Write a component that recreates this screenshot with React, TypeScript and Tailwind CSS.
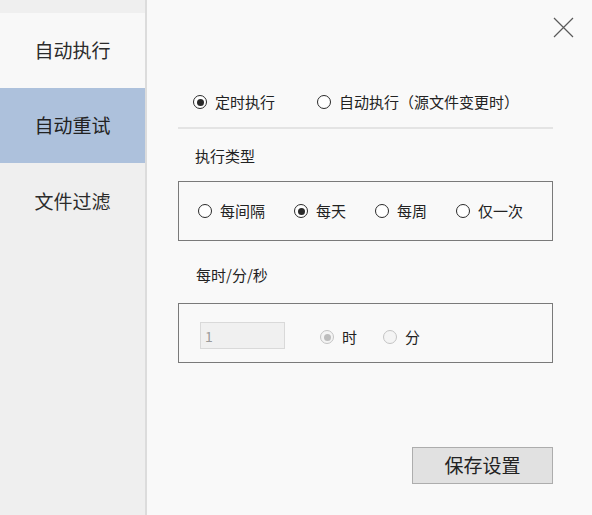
import React from "react";

const Radio = ({ checked = false, disabled = false, label }: { checked?: boolean; disabled?: boolean; label: string }) => {
    const ring = disabled ? "border-[#c4c4c4] bg-[#f4f4f4]" : "border-[#2a2a2a] bg-white";
    const dot = disabled ? "bg-[#bdbdbd]" : "bg-[#2a2a2a]";
    return (
        <div className="flex items-center gap-[8px]">
            <span className={`w-[14px] h-[14px] rounded-full border flex items-center justify-center ${ring}`}>
                {checked && <span className={`w-[7px] h-[7px] rounded-full ${dot}`} />}
            </span>
            <span className="text-[15px] leading-[20px] text-[#222222]">{label}</span>
        </div>
    );
};

export default function App() {
    return (
        <div
            className="w-[592px] h-[515px] flex bg-[#f9f9f9] overflow-hidden"
            style={{ fontFamily: '"Noto Sans CJK SC", "Noto Sans", sans-serif' }}
        >
            {/* sidebar */}
            <div className="w-[147px] shrink-0 bg-[#efefef] border-r-2 border-[#dcdcdc] flex flex-col pt-[13px]">
                <div className="h-[75px] bg-[#f8f8f8] flex items-center justify-center text-[19px] text-[#2b2b2b]">自动执行</div>
                <div className="h-[75px] bg-[#adc1dc] flex items-center justify-center text-[19px] text-[#222222]">自动重试</div>
                <div className="h-[77px] flex items-center justify-center text-[19px] text-[#2b2b2b]">文件过滤</div>
            </div>

            {/* main */}
            <div className="flex-1 flex flex-col">
                <div className="flex justify-end pt-[17px] pr-[18px]">
                    <svg width="21" height="21" viewBox="0 0 21 21">
                        <path d="M1 1 L20 20 M20 1 L1 20" stroke="#5a5a5a" strokeWidth="1.2" fill="none" />
                    </svg>
                </div>

                <div className="pl-[31px] pr-[39px] flex flex-col">
                    <div className="mt-[50px] h-[28px] flex items-center pl-[15px] gap-[42px]">
                        <Radio checked label="定时执行" />
                        <Radio label="自动执行（源文件变更时）" />
                    </div>
                    <div className="mt-[11px] h-[2px] bg-[#e4e4e4]" />

                    <div className="mt-[17px] pl-[17px] text-[15px] leading-[20px] text-[#222222]">执行类型</div>
                    <div className="mt-[15px] h-[60px] border border-[#7a7a7a] flex items-center pl-[19px] gap-[29px]">
                        <Radio label="每间隔" />
                        <Radio checked label="每天" />
                        <Radio label="每周" />
                        <Radio label="仅一次" />
                    </div>

                    <div className="mt-[24px] pl-[18px] text-[15px] leading-[20px] text-[#222222]">每时/分/秒</div>
                    <div className="mt-[18px] h-[60px] border border-[#7a7a7a] flex items-start pt-[18px] pl-[21px]">
                        <input
                            disabled
                            value="1"
                            readOnly
                            className="w-[85px] h-[27px] bg-[#f0f0f0] border border-[#d9d9d9] px-[4px] text-[14px] text-[#9a9a9a] outline-none"
                        />
                        <div className="ml-[35px] mt-[5px] flex items-center gap-[26px]">
                            <Radio checked disabled label="时" />
                            <Radio disabled label="分" />
                        </div>
                    </div>

                    <div className="mt-[84px] flex justify-end">
                        <button className="w-[141px] h-[37px] bg-[#e1e1e1] border border-[#adadad] text-[19px] text-[#222222] flex items-center justify-center">
                            保存设置
                        </button>
                    </div>
                </div>
            </div>
        </div>
    );
}
